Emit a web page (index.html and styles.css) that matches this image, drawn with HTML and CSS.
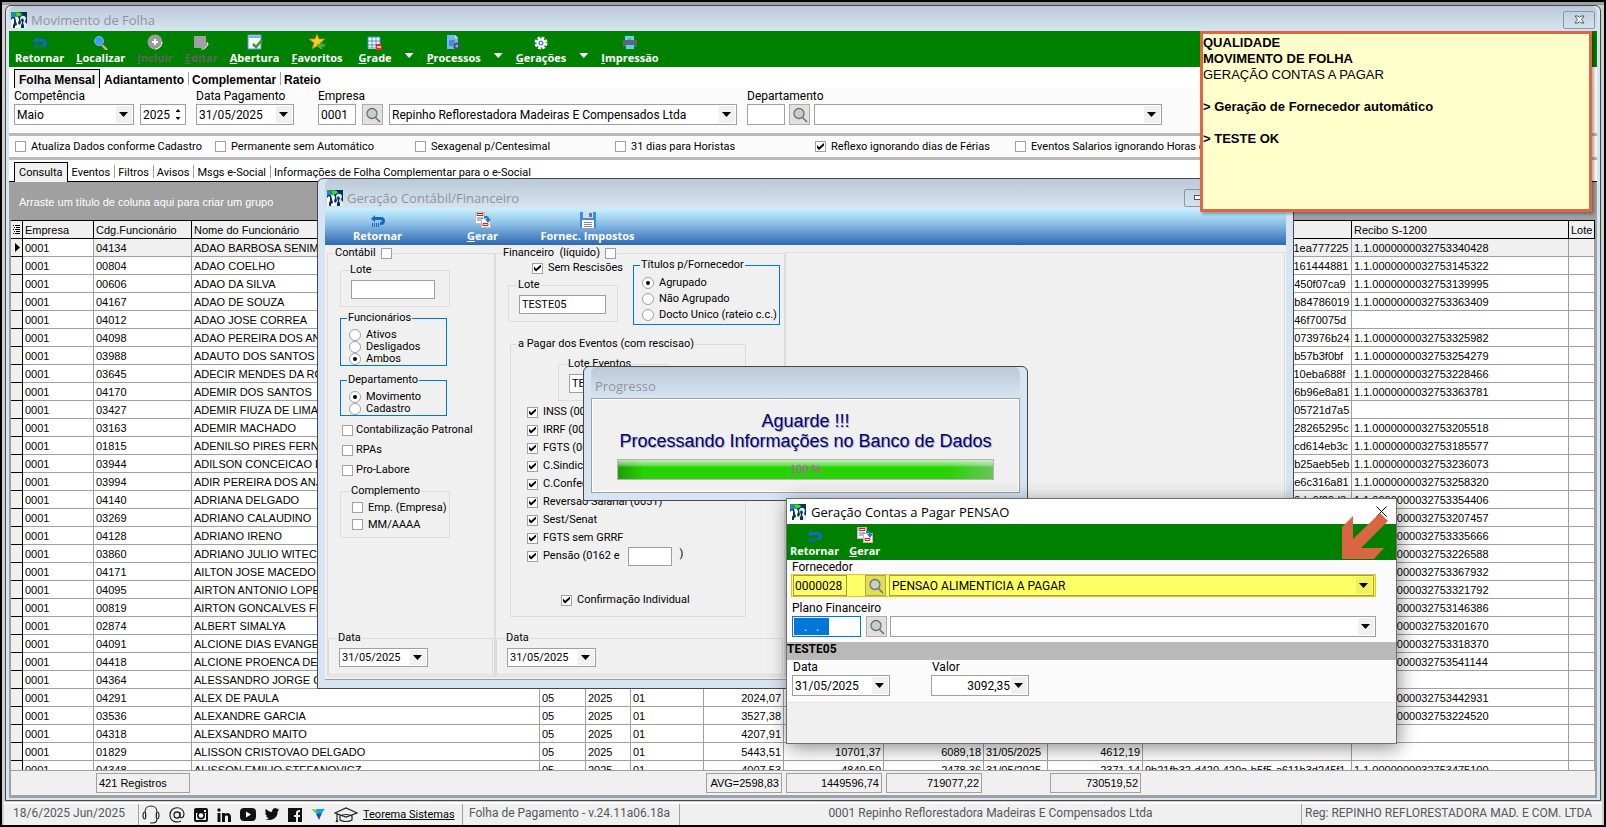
FILE: index.html
```html
<!DOCTYPE html>
<html lang="pt-BR">

<head>
    <meta charset="UTF-8">
    <meta name="viewport" content="width=device-width, initial-scale=1.0">
    <title>Movimento de Folha</title>
    <link rel="stylesheet" href="styles.css">
</head>

<body>
    <!-- icones usados mais de uma vez -->
    <svg class="defs" aria-hidden="true">
        <symbol id="app" viewBox="0 0 16 16">
            <rect width="16" height="16" fill="#06325c" />
            <path d="M0 0h9L5 5H0z" fill="#1ba03c" />
            <path d="M5 1h5l1 2-5 2z" fill="#4fd52c" />
            <path d="M0 2l4-1v3L0 6z" fill="#1287e8" />
            <path d="M0 8l2-2 1 1v4l-1 2v3H0v-3zM4 5c3-1 4 1 4 3L7 11l1 2v3H4v-2l2-1c0-2-1-2-1-4z" fill="#fff" />
            <path d="M9 6c1-3 5-3 6 0l-1 4 2 2v4h-3v-3l-1-2 1-3-2-2-1 2 1 3-1 2v3H8v-3l2-2z" fill="#e4edf4" />
        </symbol>
        <symbol id="back" viewBox="0 0 16 16">
            <path d="M5 1v2h6c3 0 4 2 4 4s-1 4-4 4h-1V8h1c1 0 1-2 0-2H5v2L1 5z" fill="#1a66c8" />
            <path d="M2.500 9v4M4.500 9v4M6.500 9v4M8.500 9v4" stroke="#1a66c8" />
        </symbol>
        <symbol id="lens" viewBox="0 0 16 16">
            <circle cx="7" cy="6.500" r="5" fill="#c3d0cf" stroke="#707070" stroke-width="1.300" />
            <path d="M10.500 10.500L15 15" stroke="#707070" stroke-width="1.600" />
        </symbol>
        <symbol id="generate" viewBox="0 0 16 16">
            <rect x=".5" y=".5" width="9" height="11" fill="#fff" stroke="#c9b8b0" />
            <rect x="6.500" y="6.500" width="9" height="9" fill="#fff" stroke="#c9b8b0" />
            <path d="M2 1.500h6v2H2z" fill="#fff" stroke="#e01818" />
            <path d="M2 6h6M2 8h4" stroke="#4a78b8" />
            <path d="M8 11.500h5v2H8z" fill="#fff" stroke="#e01818" />
            <path d="M9 4h3c1 0 2 1 2 3h2l-3 4-3-4h2c0-1 0-1-1-1H9z" fill="#1c7cc8" />
        </symbol>
    </svg>

    <main class="window main">
        <header class="title">
            <svg width="16" height="16"><use href="#app" /></svg>
            <h1>Movimento de Folha</h1>
            <button class="caption" aria-label="Fechar"><svg width="11" height="9" viewBox="0 0 11 9"><path d="M1 1h3l1.500 1.500L7 1h3L7.500 4.500 10 8H7L5.500 6.500 4 8H1l2.500-3.500z" fill="#fff" stroke="#4c5566" /></svg></button>
        </header>

        <nav class="toolbar green">
            <button><svg width="16" height="14" viewBox="0 0 16 14"><use href="#back" width="16" height="16" /></svg><span>Retornar</span></button>
            <button><svg width="16" height="14" viewBox="0 0 16 14"><path d="M9 9l5 5" stroke="#d8b070" stroke-width="2.400" /><circle cx="6" cy="5" r="4.500" fill="#3f9bf5" stroke="#7fb4e8" /></svg><span><u>L</u>ocalizar</span></button>
            <button disabled><svg width="16" height="16" viewBox="0 0 16 16"><circle cx="8" cy="8" r="7.500" fill="#9c9c9c" /><path d="M8 15a7 7 0 0 0 7-7" fill="none" stroke="#fff" /><path d="M8 5v6M5 8h6" stroke="#fff" stroke-width="2" /></svg><span><u>I</u>ncluir</span></button>
            <button disabled><svg width="16" height="14" viewBox="0 0 16 14"><path d="M1 0h12v7l3 1-4 5-2-1H1z" fill="#a0a0a0" /><path d="M14 6l1 3-4 4H8" fill="none" stroke="#e8e8e8" /></svg><span><u>E</u>ditar</span></button>
            <button><svg width="16" height="16" viewBox="0 0 16 16"><rect x="1" y="1" width="13" height="14" fill="#f4f9ff" stroke="#5b8fd0" /><path d="M2 2h11v2H2z" fill="#7fb2ea" /><path d="M6 10l3 3 6-7" fill="none" stroke="#3c9b32" stroke-width="2.600" /></svg><span><u>A</u>bertura</span></button>
            <button><svg width="16" height="16" viewBox="0 0 16 16"><path d="M8 0l2 5h6l-5 4 2 6-5-3-5 3 2-6-5-4h6z" fill="#ffc928" stroke="#c87810" stroke-width=".7" /><path d="M12 8v7M8 11.500h8" stroke="#43b030" stroke-width="2.400" /></svg><span><u>F</u>avoritos</span></button>
            <button class="spaced"><svg width="16" height="14" viewBox="0 0 16 14"><path d="M1 1h12v12H1z" fill="#fff" /><path d="M1 1h12v11H1zM5 1v11M9 1v11M1 5h12M1 9h12" fill="none" stroke="#4b8ad8" /><path d="M9 8h6v6H9z" fill="#e03020" /><path d="M10 11h4" stroke="#fff" stroke-width="1.500" /></svg><span><u>G</u>rade</span></button>
            <button class="more" aria-label="Mais de Grade"></button>
            <button><svg width="16" height="15" viewBox="0 0 16 15"><path d="M1 0h8l3 3v11H1z" fill="#78b4f4" /><path d="M9 0v3h3z" fill="#dcecff" /><path d="M3 6h6M3 8h5M3 10h4" stroke="#1d5cb0" /><circle cx="11" cy="11" r="2.600" fill="none" stroke="#3c5468" stroke-width="2" /></svg><span><u>P</u>rocessos</span></button>
            <button class="more" aria-label="Mais de Processos"></button>
            <button><svg width="16" height="14" viewBox="0 0 16 14"><circle cx="8" cy="7" r="5" fill="none" stroke="#fff" stroke-width="3" stroke-dasharray="2.600 1.320" /><circle cx="8" cy="7" r="3.500" fill="#3187e0" stroke="#fff" stroke-width="2" /><circle cx="8" cy="7" r="1.200" fill="#fff" /></svg><span><u>G</u>erações</span></button>
            <button class="more" aria-label="Mais de Gerações"></button>
            <button><svg width="16" height="14" viewBox="0 0 16 14"><path d="M3 0h9v4H3z" fill="#5cd4f4" /><rect x="1" y="4" width="14" height="7" rx="1" fill="#5c6874" /><path d="M4 9h8v4H4z" fill="#4cd8f8" /><path d="M6 3h3" stroke="#c050c0" /></svg><span><u>I</u>mpressão</span></button>
        </nav>

        <nav class="tabs bold">
            <a href="#" class="on">Folha Mensal</a>
            <a href="#">Adiantamento</a>
            <a href="#">Complementar</a>
            <a href="#">Rateio</a>
        </nav>

        <section class="filters">
            <div class="field">
                <label for="mes">Competência</label>
                <div class="line">
                    <span class="combo w120"><select id="mes"><option>Maio</option></select><i></i></span>
                    <span class="combo spin"><input type="text" value="2025" aria-label="Ano"><b></b></span>
                </div>
            </div>
            <div class="field">
                <label for="pagto">Data Pagamento</label>
                <span class="combo w98"><input type="text" id="pagto" value="31/05/2025"><i></i></span>
            </div>
            <div class="field company">
                <label for="empresa">Empresa</label>
                <div class="line">
                    <input type="text" class="box w38" id="empresa" value="0001">
                    <button class="search" aria-label="Buscar empresa"><svg width="16" height="16"><use href="#lens" /></svg></button>
                    <span class="combo w348"><select aria-label="Nome da empresa"><option>Repinho Reflorestadora Madeiras E Compensados Ltda</option></select><i></i></span>
                </div>
            </div>
            <div class="field">
                <label for="depto">Departamento</label>
                <div class="line tight">
                    <input type="text" class="box w38" id="depto">
                    <button class="search" aria-label="Buscar departamento"><svg width="16" height="16"><use href="#lens" /></svg></button>
                    <span class="combo w348"><select aria-label="Nome do departamento"><option></option></select><i></i></span>
                </div>
            </div>
        </section>

        <section class="options ms">
            <label><input type="checkbox">Atualiza Dados conforme Cadastro</label>
            <label><input type="checkbox">Permanente sem Automático</label>
            <label><input type="checkbox">Sexagenal p/Centesimal</label>
            <label><input type="checkbox">31 dias para Horistas</label>
            <label><input type="checkbox" checked>Reflexo ignorando dias de Férias</label>
            <label><input type="checkbox">Eventos Salarios ignorando Horas do Mês</label>
        </section>

        <nav class="tabs ms lined">
            <a href="#" class="on">Consulta</a>
            <a href="#">Eventos</a>
            <a href="#">Filtros</a>
            <a href="#">Avisos</a>
            <a href="#">Msgs e-Social</a>
            <a href="#">Informações de Folha Complementar para o e-Social</a>
        </nav>

        <section class="grid">
            <p class="group">Arraste um título de coluna aqui para criar um grupo</p>
            <div class="rows">
                <table>
                    <colgroup>
                        <col class="c12"><col class="c71"><col class="c98"><col class="c348"><col class="c46"><col class="c45"><col class="c73"><col class="c80"><col class="c100"><col class="c100"><col class="c64"><col class="c95"><col class="c209"><col class="c217"><col>
                    </colgroup>
                    <thead>
                        <tr>
                            <th><svg width="8" height="9" viewBox="0 0 8 9"><path d="M0 .5h1M2 .5h5M1 2.500h1M3 2.500h4M0 4.500h1M2 4.500h5M1 6.500h1M3 6.500h4M0 8.500h1M2 8.500h5" stroke="#000" /></svg></th>
                            <th>Empresa</th>
                            <th>Cdg.Funcionário</th>
                            <th>Nome do Funcionário</th>
                            <th></th>
                            <th></th>
                            <th></th>
                            <th></th>
                            <th></th>
                            <th></th>
                            <th></th>
                            <th></th>
                            <th></th>
                            <th>Recibo S-1200</th>
                            <th>Lote</th>
                        </tr>
                    </thead>
                    <tbody id="lista"></tbody>
                </table>
            </div>
            <footer class="totals">
                <span class="count">421 Registros</span>
                <span class="avg">AVG=2598,83</span>
                <span class="sum1">1449596,74</span>
                <span class="sum2">719077,22</span>
                <span class="sum3">730519,52</span>
            </footer>
        </section>
    </main>

    <footer class="status">
        <span class="cell date">18/6/2025 Jun/2025</span>
        <div class="cell social">
            <a href="#" aria-label="Suporte"><svg width="18" height="20" viewBox="0 0 18 20"><path d="M3 7c0-8 12-8 12 0M3 14c1 0 1-7 0-7s-2 1-2 3.500S2 14 3 14zM15 14c-1 0-1-7 0-7s2 1 2 3.500S16 14 15 14zM15 14c0 3-2 4-5 4H8" fill="none" stroke="#222" stroke-width="1.100" /></svg></a>
            <a href="#" aria-label="E-mail"><svg width="16" height="16" viewBox="0 0 16 16"><circle cx="8" cy="8" r="3" fill="none" stroke="#222" stroke-width="1.300" /><path d="M11 5v4c0 3 4 2 4-2 0-8-14-9-14 1 0 7 7 8 11 6" fill="none" stroke="#222" stroke-width="1.200" /></svg></a>
            <a href="#" aria-label="Instagram"><svg width="14" height="14" viewBox="0 0 14 14"><rect width="14" height="14" rx="2" fill="#111" /><rect x="2" y="5" width="10" height="7" fill="#fff" /><circle cx="7" cy="7.500" r="4" fill="#111" /><circle cx="7" cy="7.500" r="2.300" fill="#fff" /><path d="M10 2h2v2h-2z" fill="#fff" /></svg></a>
            <a href="#" aria-label="LinkedIn"><svg width="14" height="14" viewBox="0 0 14 14"><circle cx="2" cy="2" r="1.700" fill="#111" /><path d="M.5 5h3v9h-3zM5 5h3v1c2-2 6-1 6 3v5h-3V9c0-2-3-2-3 0v5H5z" fill="#111" /></svg></a>
            <a href="#" aria-label="YouTube"><svg width="16" height="13" viewBox="0 0 16 13"><rect width="16" height="13" rx="4" fill="#111" /><path d="M6 3.500v6l5-3z" fill="#fff" /></svg></a>
            <a href="#" aria-label="Twitter"><svg width="14" height="13" viewBox="0 0 14 13"><path d="M1 1c2 2 4 3 6 3 0-4 4-5 5-3l2-.5-1 1.500 1 .2-1.500 1.300C13 9 8 14 0 11c2 0 3 0 4-1-2 0-2-1-3-2h1C1 7 0 6 .5 4.500L1.500 5C0 4 0 2 1 1z" fill="#111" /></svg></a>
            <a href="#" aria-label="Facebook"><svg width="14" height="14" viewBox="0 0 14 14"><path d="M0 0h14v14h-4V9h2V7h-2V5c0-1 1-1 2-1V2C9 2 8 3 8 5v2H6v2h2v5H0z" fill="#111" /></svg></a>
            <a href="#" aria-label="Teorema"><svg width="14" height="12" viewBox="0 0 14 12"><path d="M0 0l6 1 1 5z" fill="#6cd40c" /><path d="M5 0h9l-5 6H6z" fill="#1aa0f0" /><path d="M5 5l6-1-3 7z" fill="#1450b0" /></svg></a>
            <a href="#" aria-label="Cursos"><svg width="24" height="16" viewBox="0 0 24 16"><path d="M1 6l11-5 11 5-11 4zM6 8v5c3 2 9 2 12 0V8M6 9c3-2 9-2 12 0M3 7v7M2 15l1-2 1 2" fill="none" stroke="#222" stroke-width="1.200" /></svg></a>
            <a href="#" class="site">Teorema Sistemas</a>
        </div>
        <span class="cell version">Folha de Pagamento - v.24.11a06.18a</span>
        <span class="cell firm">0001 Repinho Reflorestadora Madeiras E Compensados Ltda</span>
        <span class="cell reg">Reg: REPINHO REFLORESTADORA MAD. E COM. LTDA</span>
    </footer>

    <!-- janela: geração contábil -->
    <section class="window contabil">
        <header class="title">
            <svg width="16" height="16"><use href="#app" /></svg>
            <h2>Geração Contábil/Financeiro</h2>
            <button class="caption" aria-label="Minimizar"><svg width="12" height="5" viewBox="0 0 12 5"><rect x=".5" y=".5" width="11" height="4" fill="#fff" stroke="#4c5566" /></svg></button>
        </header>
        <nav class="toolbar blue">
            <button class="w105"><svg width="16" height="14" viewBox="0 0 16 14"><use href="#back" width="16" height="16" /></svg><span>Retornar</span></button>
            <button class="w105"><svg width="16" height="16"><use href="#generate" /></svg><span><u>G</u>erar</span></button>
            <button class="w105"><svg width="16" height="16" viewBox="0 0 16 16"><path d="M0 0h16v16H1l-1-1z" fill="#3d8ed6" /><path d="M3 0h10v6H3z" fill="#d4dde4" /><path d="M9 1h3v4H9z" fill="#5a7890" /><path d="M2 8h12v8H2z" fill="#fff" /><path d="M4 10.500h8M4 12.500h8M4 14.500h8" stroke="#888" /></svg><span>Fornec. Impostos</span></button>
        </nav>
        <div class="panels ms">
            <fieldset class="panel">
                <legend><label>Contábil<input type="checkbox"></label></legend>
                <fieldset class="sub lote">
                    <legend>Lote</legend>
                    <input type="text" class="box w84" aria-label="Lote contábil">
                </fieldset>
                <fieldset class="sub radios">
                    <legend>Funcionários</legend>
                    <label><input type="radio" name="func">Ativos</label>
                    <label><input type="radio" name="func">Desligados</label>
                    <label><input type="radio" name="func" checked>Ambos</label>
                </fieldset>
                <fieldset class="sub radios">
                    <legend>Departamento</legend>
                    <label><input type="radio" name="dep" checked>Movimento</label>
                    <label><input type="radio" name="dep">Cadastro</label>
                </fieldset>
                <div class="checks">
                    <label><input type="checkbox">Contabilização Patronal</label>
                    <label><input type="checkbox">RPAs</label>
                    <label><input type="checkbox">Pro-Labore</label>
                </div>
                <fieldset class="sub extra">
                    <legend>Complemento</legend>
                    <label><input type="checkbox">Emp. (Empresa)</label>
                    <label><input type="checkbox">MM/AAAA</label>
                </fieldset>
                <fieldset class="due">
                    <legend>Data</legend>
                    <span class="combo w89"><input type="text" value="31/05/2025" aria-label="Data contábil"><i></i></span>
                </fieldset>
            </fieldset>

            <fieldset class="panel wide">
                <legend><label>Financeiro&nbsp; (líquido)<input type="checkbox"></label></legend>
                <div class="split">
                    <div class="w110">
                        <label class="resc"><input type="checkbox" checked>Sem Rescisões</label>
                        <fieldset class="sub lote">
                            <legend>Lote</legend>
                            <input type="text" class="box w87" value="TESTE05" aria-label="Lote financeiro">
                        </fieldset>
                    </div>
                    <fieldset class="sub radios titles">
                        <legend>Títulos p/Fornecedor</legend>
                        <label><input type="radio" name="tit" checked>Agrupado</label>
                        <label><input type="radio" name="tit">Não Agrupado</label>
                        <label><input type="radio" name="tit">Docto Unico (rateio c.c.)</label>
                    </fieldset>
                </div>
                <fieldset class="events">
                    <legend>a Pagar dos Eventos (com rescisao)</legend>
                    <fieldset class="sub lote">
                        <legend>Lote Eventos</legend>
                        <input type="text" class="box w87" value="TESTE05" aria-label="Lote Eventos">
                    </fieldset>
                    <label><input type="checkbox" checked>INSS (0050)</label>
                    <label><input type="checkbox" checked>IRRF (0052)</label>
                    <label><input type="checkbox" checked>FGTS (0054)</label>
                    <label><input type="checkbox" checked>C.Sindical (0053)</label>
                    <label><input type="checkbox" checked>C.Confederativa</label>
                    <label><input type="checkbox" checked>Reversao Salarial (0051)</label>
                    <label><input type="checkbox" checked>Sest/Senat</label>
                    <label><input type="checkbox" checked>FGTS sem GRRF</label>
                    <div class="pensao-line">
                        <label><input type="checkbox" checked>Pensão (0162 e</label>
                        <input type="text" class="box w44" aria-label="Outro evento de pensão">
                        <span>)</span>
                    </div>
                    <label class="confirm"><input type="checkbox" checked>Confirmação Individual</label>
                </fieldset>
                <fieldset class="due">
                    <legend>Data</legend>
                    <span class="combo w89"><input type="text" value="31/05/2025" aria-label="Data financeiro"><i></i></span>
                </fieldset>
            </fieldset>
            <div class="rest"></div>
        </div>
    </section>

    <!-- janela: progresso -->
    <section class="window progress">
        <header class="title">
            <h2>Progresso</h2>
        </header>
        <div class="inner">
            <p>Aguarde !!!</p>
            <p>Processando Informações no Banco de Dados</p>
            <div class="bar" role="progressbar" aria-valuenow="100">100 %</div>
        </div>
    </section>

    <!-- janela: pensão -->
    <section class="pensao">
        <header>
            <svg width="16" height="16"><use href="#app" /></svg>
            <h2>Geração Contas a Pagar PENSAO</h2>
            <button aria-label="Fechar"><svg width="11" height="11" viewBox="0 0 11 11"><path d="M.5.5l10 10M10.500.5l-10 10" stroke="#000" /></svg></button>
        </header>
        <nav class="toolbar green">
            <button><svg width="16" height="14" viewBox="0 0 16 14"><use href="#back" width="16" height="16" /></svg><span>Retornar</span></button>
            <button><svg width="16" height="16"><use href="#generate" /></svg><span><u>G</u>erar</span></button>
        </nav>
        <div class="form">
            <label for="forn">Fornecedor</label>
            <div class="line marked">
                <input type="text" class="box code" id="forn" value="0000028">
                <button class="search" aria-label="Buscar fornecedor"><svg width="16" height="16"><use href="#lens" /></svg></button>
                <span class="combo fill"><select aria-label="Nome do fornecedor"><option>PENSAO ALIMENTICIA A PAGAR</option></select><i></i></span>
            </div>
            <label for="plano">Plano Financeiro</label>
            <div class="line plan">
                <span class="mask"><input type="text" id="plano" value="&nbsp; &nbsp;.&nbsp; &nbsp;."></span>
                <button class="search" aria-label="Buscar plano"><svg width="16" height="16"><use href="#lens" /></svg></button>
                <span class="combo fill"><select aria-label="Nome do plano"><option></option></select><i></i></span>
            </div>
        </div>
        <h3>TESTE05</h3>
        <div class="values">
            <div>
                <label for="venc">Data</label>
                <span class="combo w98"><input type="text" id="venc" value="31/05/2025"><i></i></span>
            </div>
            <div>
                <label for="valor">Valor</label>
                <span class="combo w98 right"><input type="text" id="valor" value="3092,35"><i></i></span>
            </div>
        </div>
        <div class="blank"></div>
    </section>

    <svg class="arrow" width="46" height="46" viewBox="0 0 46 46"><path d="M0 46V14L11 3v23L38 0l8 8-27 27h23L32 46z" fill="#d96544" /></svg>

    <aside class="note">
        <b>QUALIDADE</b><br>
        <b>MOVIMENTO DE FOLHA</b><br>
        GERAÇÃO CONTAS A PAGAR<br>
        <br>
        <b>&gt; Geração de Fornecedor automático</b><br>
        <br>
        <b>&gt; TESTE OK</b>
    </aside>

    <script>
        /* codigo, nome, fim do id, fim do recibo, valores */
        var dados = [
            ["04134", "ADAO BARBOSA SENIMBU", "ea777225", "340428"],
            ["00804", "ADAO COELHO", "161444881", "145322"],
            ["00606", "ADAO DA SILVA", "d450f07ca9", "139995"],
            ["04167", "ADAO DE SOUZA", "b84786019", "363409"],
            ["04012", "ADAO JOSE CORREA", "746f70075d", ""],
            ["04098", "ADAO PEREIRA DOS ANJOS", "073976b24", "325982"],
            ["03988", "ADAUTO DOS SANTOS", "b57b3f0bf", "254279"],
            ["03645", "ADECIR MENDES DA ROSA", "10eba688f", "228466"],
            ["04170", "ADEMIR DOS SANTOS", "6b96e8a81", "363781"],
            ["03427", "ADEMIR FIUZA DE LIMA", "05721d7a5", ""],
            ["03163", "ADEMIR MACHADO", "28265295c", "205518"],
            ["01815", "ADENILSO PIRES FERNANDES", "cd614eb3c", "185577"],
            ["03944", "ADILSON CONCEICAO DIAS", "5b25aeb5eb", "236073"],
            ["03994", "ADIR PEREIRA DOS ANJOS", "e6c316a81", "258320"],
            ["04140", "ADRIANA DELGADO", "99da6f29d3", "354406"],
            ["03269", "ADRIANO CALAUDINO", "", "207457"],
            ["04128", "ADRIANO IRENO", "", "335666"],
            ["03860", "ADRIANO JULIO WITECK", "", "226588"],
            ["04171", "AILTON JOSE MACEDO DIAS", "", "367932"],
            ["04095", "AIRTON ANTONIO LOPES", "", "321792"],
            ["00819", "AIRTON GONCALVES FREITAS", "", "146386"],
            ["02874", "ALBERT SIMALYA", "", "201670"],
            ["04091", "ALCIONE DIAS EVANGELISTA", "", "318370"],
            ["04418", "ALCIONE PROENCA DE LIMA", "", "541144"],
            ["04364", "ALESSANDRO JORGE OLIVEIRA", "", ""],
            ["04291", "ALEX DE PAULA", "", "442931", "2024,07"],
            ["03536", "ALEXANDRE GARCIA", "", "224520", "3527,38"],
            ["04318", "ALEXSANDRO MAITO", "", "", "4207,91"],
            ["01829", "ALISSON CRISTOVAO DELGADO", "", "", "5443,51", "10701,37", "6089,18", "31/05/2025", "4612,19"],
            ["04348", "ALISSON EMILIO STEFANOVICZ", "a611b3d245f1", "475100", "4007,53", "4849,50", "2478,36", "31/05/2025", "2371,14"]
        ];
        var cabeca = "9b21fb32-d420-420a-b5f5-a611b3d245f1";
        var html = "";
        for (var i = 0; i < dados.length; i++) {
            var d = dados[i];
            var id = d[2] ? cabeca.slice(0, 36 - d[2].length) + d[2] : "";
            var recibo = d[3] ? "1.1.0000000032753" + d[3] : "";
            html += "<tr><td></td><td>0001</td><td>" + d[0] + "</td><td>" + d[1] + "</td><td>05</td><td>2025</td><td>01</td>";
            for (var j = 4; j < 9; j++) {
                html += "<td class='" + (j == 7 ? "" : "num") + "'>" + (d[j] || "") + "</td>";
            }
            html += "<td>" + id + "</td><td>" + recibo + "</td><td></td></tr>";
        }
        document.getElementById("lista").innerHTML = html;
    </script>
</body>

</html>
```
FILE: styles.css
```css
* {
    box-sizing: border-box;
    margin: 0;
    padding: 0;
}

html {
    background: #000;
}

body {
    display: flex;
    flex-direction: column;
    height: calc(100vh - 4px);
    margin: 2px;
    border-top: 3px solid #a0a0a0;
    background: #d0d0d0;
    color: #000;
    font: 12px/14px Roboto, "Liberation Sans", sans-serif;
}

button, input, select {
    font: inherit;
    color: inherit;
    border: 0;
    background: none;
    outline: 0;
}

a {
    color: inherit;
    text-decoration: none;
}

fieldset {
    border: 1px solid #dcdcdc;
    min-width: 0;
}

svg {
    display: block;
}

.defs {
    position: absolute;
    width: 0;
    height: 0;
}

.ms {
    font-size: 11px;
}

/* ---- janelas ---- */

.window {
    display: flex;
    flex-direction: column;
    border: 1px solid #45474d;
    border-radius: 6px 6px 0 0;
    background: #d7e4f2;
}

.title {
    display: flex;
    align-items: center;
    gap: 4px;
    border-radius: 6px 6px 0 0;
    background: linear-gradient(#bccad8, #d7e4f2);
    color: #8f949b;
}

.title h1, .title h2, .pensao h2 {
    flex: 1;
    font: 13px/16px "Open Sans", "Noto Sans", sans-serif;
}

.caption {
    display: flex;
    align-items: center;
    justify-content: center;
    width: 32px;
    height: 18px;
    border: 1px solid #8496b0;
    border-radius: 2px;
}

.main {
    flex: 1;
    min-height: 0;
    margin: 0 3px 1px;
    padding: 0 3px 2px;
}

.main > .title {
    flex: none;
    height: 25px;
    padding: 2px 2px 0;
}

.toolbar {
    display: flex;
    flex: none;
    height: 36px;
    padding: 0 6px;
    gap: 12px;
    color: #fff;
    font: bold 11px/15px "Open Sans", "Noto Sans", sans-serif;
}

.toolbar button {
    display: flex;
    flex-direction: column;
    align-items: center;
    justify-content: flex-end;
    padding-bottom: 2px;
}

.toolbar button:disabled {
    color: #5a6a5a;
}

.toolbar .spaced {
    margin-left: 4px;
}

.toolbar .more {
    width: 9px;
    margin: 22px 1px 0;
    height: 5px;
    padding: 0;
    background: #fff;
    clip-path: polygon(0 0, 100% 0, 50% 100%);
}

.green {
    background: #008000;
}

.blue {
    padding: 0;
    gap: 0;
    background: linear-gradient(#c4f2ff, #8fc0e6 40%, #2d68b4);
}

.w105 {
    width: 105px;
}

/* ---- abas ---- */

.tabs {
    display: flex;
    flex: none;
    align-items: flex-end;
    height: 21px;
    padding: 0 5px;
    background: #fff;
}

.tabs a {
    height: 19px;
    padding: 4px 4px 0;
}

.tabs .on {
    border: 1px solid #000;
    border-bottom: 0;
    background: #f0f0f0;
    padding-top: 3px;
}

.tabs a:not(.on) + a {
    background: linear-gradient(#a0a0a0, #a0a0a0) 0 3px / 1px 13px no-repeat;
}

.bold {
    font: bold 12px/14px "Liberation Sans", sans-serif;
}

.lined {
    height: 22px;
    border-bottom: 1px solid #000;
}

.lined .on {
    height: 20px;
    margin-bottom: -1px;
}

/* ---- filtros ---- */

.filters {
    display: flex;
    flex: none;
    gap: 10px;
    height: 45px;
    padding: 1px 5px 0;
    background: #fbfbfb;
}

.company {
    margin-left: 14px;
}

.field label {
    display: block;
    margin-bottom: 1px;
}

.line {
    display: flex;
    align-items: center;
    gap: 6px;
}

.tight {
    gap: 4px;
}

.combo {
    display: flex;
    align-items: center;
    height: 21px;
    padding: 1px;
    border: 1px solid #a0a0a0;
    background: #fff;
}

.combo input, .combo select {
    flex: 1;
    min-width: 0;
    height: 17px;
    padding: 0 1px;
    appearance: none;
}

.combo i {
    width: 16px;
    height: 17px;
    background: #f0f0f0;
}

.combo i::before {
    content: "";
    display: block;
    width: 9px;
    height: 5px;
    margin: 6px 3px;
    background: #000;
    clip-path: polygon(0 0, 100% 0, 50% 100%);
}

.spin b {
    display: flex;
    flex-direction: column;
    align-items: center;
    justify-content: space-between;
    width: 12px;
    height: 11px;
}

.spin b::before, .spin b::after {
    content: "";
    width: 5px;
    height: 3px;
    background: #000;
    clip-path: polygon(50% 0, 100% 100%, 0 100%);
}

.spin b::after {
    clip-path: polygon(0 0, 100% 0, 50% 100%);
}

.box {
    height: 21px;
    padding: 0 2px;
    border: 1px solid #a0a0a0;
    background: #fff;
}

.search {
    display: flex;
    align-items: center;
    justify-content: center;
    width: 21px;
    height: 21px;
    border: 1px solid #adadad;
    background: #e1e1e1;
}

.spin { width: 46px; }
.w38 { width: 38px; }
.w44 { width: 44px; }
.w84 { width: 84px; }
.w87 { width: 87px; }
.w89 { width: 89px; }
.w98 { width: 98px; }
.w110 { width: 110px; }
.w120 { width: 120px; }
.w348 { width: 348px; }

/* ---- caixas de marcar ---- */

input[type=checkbox], input[type=radio] {
    flex: none;
    width: 11px;
    height: 11px;
    border: 1px solid #a0a0a0;
    background: #fff;
    appearance: none;
}

input[type=checkbox]:checked::before {
    content: "";
    display: block;
    width: 7px;
    height: 7px;
    margin: 1px;
    background: #000;
    clip-path: polygon(0 30%, 30% 60%, 100% 0, 100% 35%, 30% 100%, 0 70%);
}

input[type=radio] {
    width: 12px;
    height: 12px;
    border-radius: 50%;
}

input[type=radio]:checked::before {
    content: "";
    display: block;
    width: 4px;
    height: 4px;
    margin: 3px;
    border-radius: 50%;
    background: #000;
}

.options {
    display: grid;
    grid-template-columns: repeat(8, 200px);
    flex: none;
    height: 27px;
    padding-left: 6px;
    overflow: hidden;
    border: solid #b9b9b9;
    border-width: 3px 0;
    background: #fbfbfb;
}

.options label, .panels label {
    display: flex;
    align-items: center;
    gap: 5px;
    white-space: nowrap;
}

/* ---- grade ---- */

.grid {
    display: flex;
    flex: 1;
    flex-direction: column;
    min-height: 0;
    border: solid #a0a0a0;
    border-width: 2px 2px 3px;
    background: #f0f0f0;
    font: 11px/14px "Liberation Sans", sans-serif;
}

.group {
    flex: none;
    height: 36px;
    padding: 11px 8px;
    background: #a0a0a0;
    color: #fff;
}

.rows {
    flex: 1;
    min-height: 0;
    overflow: hidden;
    border-bottom: 1px solid #a0a0a0;
}

table {
    width: 100%;
    table-layout: fixed;
    border-spacing: 0;
    background: #fff;
}

.c12 { width: 12px; }
.c45 { width: 45px; }
.c46 { width: 46px; }
.c64 { width: 64px; }
.c71 { width: 71px; }
.c73 { width: 73px; }
.c80 { width: 80px; }
.c95 { width: 95px; }
.c98 { width: 98px; }
.c100 { width: 100px; }
.c209 { width: 209px; }
.c217 { width: 217px; }
.c348 { width: 348px; }

th, td {
    height: 18px;
    padding: 0 2px;
    overflow: hidden;
    border: solid #a0a0a0;
    border-width: 0 1px 1px 0;
    font-weight: normal;
    text-align: left;
    white-space: nowrap;
}

th {
    height: 19px;
    border-color: #000;
    border-top-width: 1px;
    background: #f0f0f0;
}

td:first-child {
    border-color: #000;
    background: #f0f0f0;
}

td.num {
    text-align: right;
}

tbody tr:first-child td:nth-child(n+3) {
    background: #f0f0f0;
}

tbody tr:first-child td:first-child::before {
    content: "";
    display: block;
    width: 5px;
    height: 9px;
    margin-left: 2px;
    background: #000;
    clip-path: polygon(0 0, 100% 50%, 0 100%);
}

.totals {
    display: grid;
    grid-template-columns: 83px 98px 512px 80px 100px 100px 64px 95px;
    flex: none;
    height: 24px;
    padding: 2px 0;
}

.totals span {
    margin: 0 2px;
    padding: 2px;
    border: 1px solid #a0a0a0;
    text-align: right;
}

.totals .count {
    grid-column: 2;
    text-align: left;
}

.totals .avg { grid-column: 4; }
.totals .sum1 { grid-column: 5; }
.totals .sum2 { grid-column: 6; }
.totals .sum3 { grid-column: 8; }

/* ---- barra de status ---- */

.status {
    display: flex;
    flex: none;
    height: 23px;
    margin: 0 2px;
    border-top: 2px solid #fff;
    background: #f0f0f0;
    color: #55585c;
}

.cell {
    padding: 2px 6px;
    border-right: 1px solid #a0a0a0;
    white-space: nowrap;
}

.date {
    width: 135px;
    padding-left: 9px;
}

.social {
    display: flex;
    align-items: center;
    gap: 9px;
    width: 324px;
    padding: 0 3px;
    color: #000;
}

.site {
    margin-left: -4px;
    font-size: 11px;
    text-decoration: underline;
}

.version {
    width: 217px;
}

.firm {
    flex: 1;
    text-align: center;
}

.reg {
    width: 300px;
    padding: 2px 3px;
    border: 0;
}

/* ---- geração contábil ---- */

.contabil {
    position: absolute;
    top: 178px;
    left: 317px;
    width: 977px;
    height: 511px;
    padding: 0 7px 8px;
}

.contabil .title {
    height: 30px;
    padding: 7px 2px 0;
}

.contabil .caption {
    margin-right: 68px;
}

.panels {
    display: flex;
    flex: 1;
    min-height: 0;
    padding: 2px 1px 2px 2px;
    background: #f0f0f0;
    border-bottom: 1px solid #a0a0a0;
}

.panels legend {
    height: 12px;
    padding: 0 1px;
    line-height: 12px;
}

.panel {
    display: flex;
    flex-direction: column;
    width: 168px;
}

.panel > legend {
    margin-left: 6px;
}

.panel > fieldset.sub {
    margin-left: 12px;
}

.wide {
    width: 290px;
}

.rest {
    flex: 1;
    margin-top: 5px;
    border: 1px solid #dcdcdc;
}

.sub {
    flex: none;
    width: 110px;
    margin-top: 5px;
    padding-left: 8px;
}

.sub legend, .due legend, .events legend {
    margin-left: -2px;
}

.lote, .due {
    height: 43px;
    padding: 4px 0 0 10px;
}

.panels .box, .panels .combo {
    height: 19px;
}

.panels .combo i, .panels .combo input {
    height: 15px;
}

.panels .combo i::before {
    margin-top: 5px;
}

.radios {
    width: 107px;
    padding-top: 5px;
    border-color: #0078d7;
}

.radios label {
    height: 12px;
}

.radios + .radios {
    margin-top: 8px;
}

.checks {
    margin: 4px 0 0 14px;
}

.checks label {
    height: 20px;
    gap: 3px;
}

.extra {
    height: 53px;
    padding: 2px 0 0 11px;
}

.extra label {
    height: 17px;
}

.due {
    flex: none;
    margin: auto 1px 1px 0;
}

.split {
    display: flex;
    height: 79px;
    gap: 15px;
    padding-left: 12px;
}

.resc {
    height: 18px;
    padding-left: 24px;
}

.split .lote {
    margin-top: 2px;
}

.split .titles {
    width: 147px;
    height: 66px;
    margin: 0;
    padding-top: 4px;
}

.titles label {
    height: 16px;
}

.events {
    width: 236px;
    height: 279px;
    margin-left: 14px;
    padding: 8px 0 0 16px;
}

.events > legend {
    margin-left: -10px;
}

.events .lote {
    margin: 0 0 2px 31px;
}

.events label {
    height: 18px;
}

.pensao-line {
    display: flex;
    gap: 8px;
}

.events .confirm {
    margin: 25px 0 0 34px;
}

/* ---- progresso ---- */

.progress {
    position: absolute;
    top: 366px;
    left: 583px;
    width: 445px;
    height: 135px;
    padding: 0 7px 7px;
}

.progress .title {
    height: 31px;
    padding: 7px 4px 0;
}

.inner {
    flex: 1;
    padding: 12px 25px;
    border: 1px solid #a0a0a0;
    background: #f0f0f0;
    box-shadow: inset 0 0 0 1px #fff;
    color: #000080;
    font: 18px/20px "Liberation Sans", sans-serif;
    text-align: center;
    text-shadow: 1px 1px #b0b0b0;
    white-space: nowrap;
}

.bar {
    height: 21px;
    margin-top: 8px;
    border: 1px solid #b4b4b4;
    background: linear-gradient(rgba(255, 255, 255, .7), rgba(255, 255, 255, .25) 6px, transparent 7px), linear-gradient(90deg, #1d9c05, #29d205 7%, #29d205 88%, #67c755);
    color: #d23cd2;
    font-size: 11px;
    line-height: 19px;
    text-shadow: none;
}

/* ---- pensão ---- */

.pensao {
    position: absolute;
    top: 498px;
    left: 786px;
    width: 611px;
    display: flex;
    flex-direction: column;
    border: 1px solid #6e6e6e;
    background: #fbfbfb;
    box-shadow: 2px 4px 18px rgba(0, 0, 0, .45);
}

.pensao header {
    display: flex;
    align-items: center;
    gap: 5px;
    height: 25px;
    padding: 0 9px 0 3px;
    background: #fff;
}

.pensao .toolbar {
    padding: 0 3px;
    gap: 10px;
}

.form {
    height: 82px;
    padding: 0 20px 0 4px;
}

.form label, .values label {
    display: block;
    padding-left: 1px;
}

.marked {
    gap: 3px;
    height: 23px;
    padding: 0 1px;
    border: 1px solid #f5c010;
    background: #ffff66;
}

.marked .code {
    width: 54px;
    margin-right: 15px;
    padding: 0 1px;
    border-color: #a0a040;
    background: none;
}

.marked .search {
    border-color: #a8a844;
    background: #dfdf55;
}

.marked .combo {
    border-color: #a0a040;
    background: none;
}

.marked .combo i {
    background: #f0f060;
}

.fill {
    flex: 1;
}

.form .line + label {
    margin-top: 4px;
}

.plan {
    gap: 3px;
    margin: 1px 0 0 1px;
}

.mask {
    width: 69px;
    height: 21px;
    margin-right: 2px;
    padding: 1px;
    border: 1px solid #0078d7;
    background: #fff;
}

.mask input {
    display: block;
    width: 35px;
    height: 17px;
    padding: 0 1px;
    background: #0078d7;
    color: #fff;
}

.pensao h3 {
    height: 18px;
    background: #b9b9b9;
    font: bold 12px/14px Roboto, sans-serif;
}

.values {
    display: flex;
    gap: 41px;
    height: 42px;
    padding: 0 5px;
}

.values .combo {
    margin-top: 1px;
}

.right input {
    text-align: right;
}

.blank {
    height: 41px;
    border-top: 1px solid #e4e4e4;
    background: #f0f0f0;
}

.arrow {
    position: absolute;
    top: 513px;
    left: 1342px;
}

.note {
    position: absolute;
    top: 31px;
    left: 1200px;
    width: 392px;
    height: 181px;
    padding-top: 1px;
    border: 3px solid #dc6646;
    background: #ffffcc;
    box-shadow: 2px 2px 3px rgba(0, 0, 0, .35);
    font: 13px/16px "Liberation Sans", sans-serif;
}
```
